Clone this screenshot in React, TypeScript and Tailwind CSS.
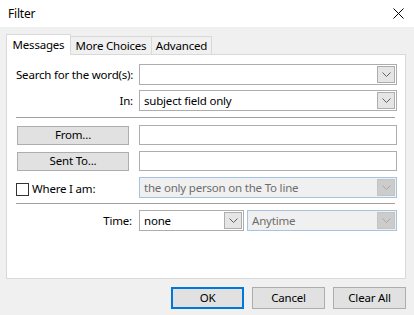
import React from "react";

function Chevron({ color = "#606060" }: { color?: string }) {
  return (
    <svg width="9" height="5" viewBox="0 0 9 5" fill="none">
      <path d="M0.5 0.5 L4.5 4.5 L8.5 0.5" stroke={color} strokeWidth="1" />
    </svg>
  );
}

function ArrowBox({ disabled }: { disabled?: boolean }) {
  return (
    <div
      className={
        disabled
          ? "my-[1px] mr-[1px] flex h-[17px] w-[18px] items-center justify-center border border-[#c4c4c4] bg-[#cccccc]"
          : "my-[1px] mr-[1px] flex h-[17px] w-[18px] items-center justify-center border border-[#adadad] bg-[#e5e5e5]"
      }
    >
      <Chevron color={disabled ? "#a8a8a8" : "#606060"} />
    </div>
  );
}

export default function App() {
  return (
    <div className="flex h-[315px] w-[414px] flex-col whitespace-nowrap bg-[#f0f0f0] font-['Noto_Sans',sans-serif] text-[11.5px] leading-none tracking-[-0.2px] text-black">
      {/* Title bar */}
      <div className="flex h-[27px] items-center justify-between bg-white pl-[8px] pr-[10px]">
        <span className="text-[12px]">Filter</span>
        <svg width="11" height="11" viewBox="0 0 11 11" fill="none">
          <path d="M0.5 0.5 L10.5 10.5 M10.5 0.5 L0.5 10.5" stroke="#000" strokeWidth="1" />
        </svg>
      </div>

      {/* Tabs */}
      <div className="ml-[6px] mt-[7px] flex items-end">
        <div className="relative z-10 -mb-px flex h-[21px] w-[65px] items-center justify-center border border-b-0 border-[#d9d9d9] bg-white pb-[1px]">
          Messages
        </div>
        <div className="flex h-[18px] w-[81px] items-center justify-center border border-b-0 border-l-0 border-[#d9d9d9] bg-[#f0f0f0] pt-[1px]">
          More Choices
        </div>
        <div className="flex h-[18px] w-[60px] items-center justify-center border border-b-0 border-l-0 border-[#d9d9d9] bg-[#f0f0f0] pt-[1px]">
          Advanced
        </div>
      </div>

      {/* Panel */}
      <div className="ml-[6px] flex h-[225px] w-[400px] flex-col border border-[#d9d9d9] bg-white pl-[9px] pt-[9px]">
        {/* Search row */}
        <div className="flex h-[21px] items-center">
          <div className="w-[123px] pr-[6px] text-right">Search for the word(s):</div>
          <div className="flex h-[21px] w-[258px] items-stretch border border-[#adadad] bg-white">
            <div className="flex-1" />
            <ArrowBox />
          </div>
        </div>
        {/* In row */}
        <div className="mt-[5px] flex h-[21px] items-center">
          <div className="w-[123px] pr-[6px] text-right">In:</div>
          <div className="flex h-[21px] w-[258px] items-stretch border border-[#adadad] bg-white">
            <div className="flex flex-1 items-center pl-[4px]">subject field only</div>
            <ArrowBox />
          </div>
        </div>
        <div className="mt-[6px] h-px w-[379px] bg-[#a0a0a0]" />

        {/* From */}
        <div className="mt-[7px] flex h-[20px] items-center">
          <div className="w-[123px] pl-[1px]">
            <div className="flex h-[19px] w-[112px] items-center justify-center border border-[#adadad] bg-[#e1e1e1]">
              From...
            </div>
          </div>
          <div className="h-[20px] w-[258px] border border-[#adadad] bg-white" />
        </div>
        {/* Sent To */}
        <div className="mt-[6px] flex h-[20px] items-center">
          <div className="w-[123px] pl-[1px]">
            <div className="flex h-[19px] w-[112px] items-center justify-center border border-[#adadad] bg-[#e1e1e1]">
              Sent To...
            </div>
          </div>
          <div className="h-[20px] w-[258px] border border-[#adadad] bg-white" />
        </div>
        {/* Where I am */}
        <div className="mt-[6px] flex h-[21px] items-center">
          <div className="flex w-[123px] items-center">
            <div className="mt-[3px] h-[13px] w-[13px] border border-[#333333] bg-white" />
            <span className="ml-[3px] mt-[3px]">Where I am:</span>
          </div>
          <div className="flex h-[21px] w-[258px] items-stretch border border-[#a5c3e3] bg-[#f0f0f0] text-[#6d6d6d]">
            <div className="flex flex-1 items-center pl-[4px]">the only person on the To line</div>
            <ArrowBox disabled />
          </div>
        </div>
        <div className="mt-[5px] h-px w-[379px] bg-[#a0a0a0]" />

        {/* Time */}
        <div className="mt-[6px] flex h-[21px] items-center">
          <div className="w-[123px] pr-[7px] text-right">Time:</div>
          <div className="flex h-[21px] w-[105px] items-stretch border border-[#adadad] bg-white">
            <div className="flex flex-1 items-center pl-[4px]">none</div>
            <ArrowBox />
          </div>
          <div className="ml-[3px] flex h-[21px] w-[150px] items-stretch border border-[#a5c3e3] bg-[#f0f0f0] text-[#6d6d6d]">
            <div className="flex flex-1 items-center pl-[4px]">Anytime</div>
            <ArrowBox disabled />
          </div>
        </div>
      </div>

      {/* Buttons */}
      <div className="mr-[8px] mt-[8px] flex justify-end gap-[8px]">
        <div className="flex h-[22px] w-[73px] items-center justify-center border-2 border-[#0078d7] bg-[#e1e1e1]">
          OK
        </div>
        <div className="flex h-[22px] w-[73px] items-center justify-center border border-[#adadad] bg-[#e1e1e1]">
          Cancel
        </div>
        <div className="flex h-[22px] w-[73px] items-center justify-center border border-[#adadad] bg-[#e1e1e1]">
          Clear All
        </div>
      </div>
    </div>
  );
}
